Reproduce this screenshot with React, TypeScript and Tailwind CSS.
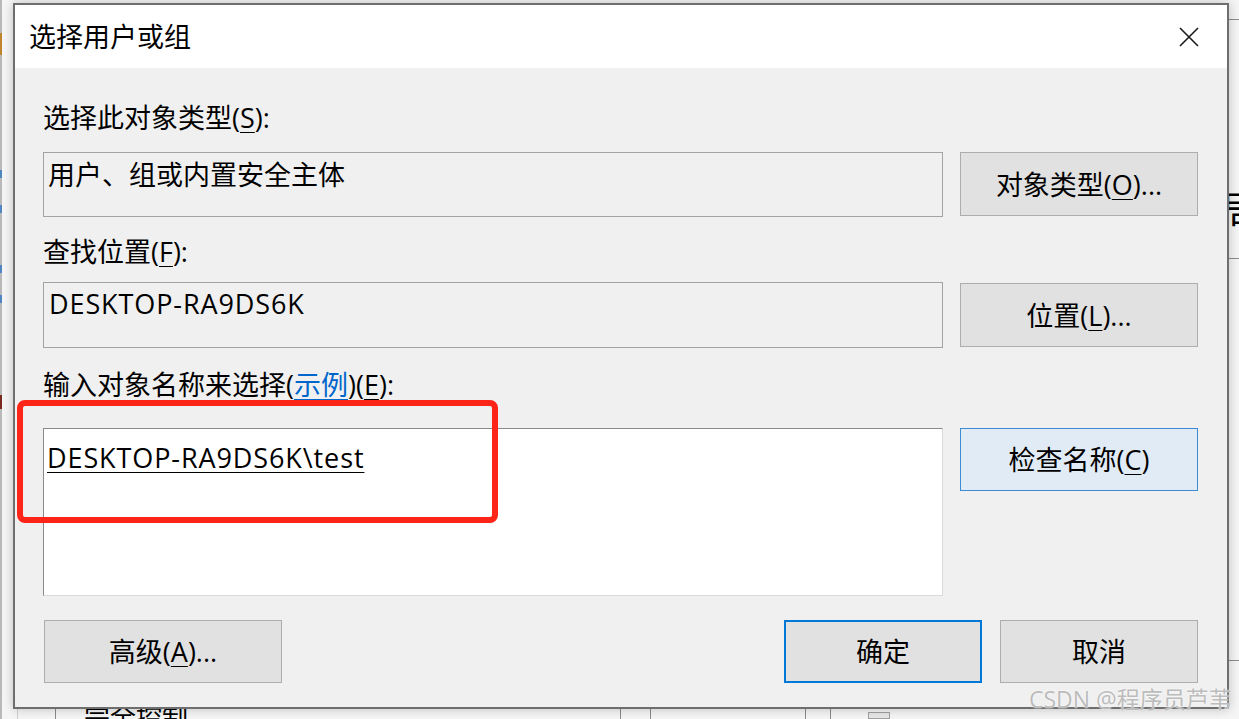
import type { ReactNode } from "react";

const font = "font-['Open_Sans','Noto_Sans_CJK_SC',sans-serif]";

function Acc({ c }: { c: string }) {
  return <span className="underline decoration-1 underline-offset-[4px]">{c}</span>;
}

function Btn({ children, className = "" }: { children: ReactNode; className?: string }) {
  return (
    <button className={`flex items-center justify-center text-[27px] leading-none text-black ${className}`}>
      {children}
    </button>
  );
}

export default function App() {
  return (
    <div className={`relative h-[719px] w-[1239px] overflow-hidden bg-[#f5f5f5] text-black ${font}`}>
      {/* window behind the dialog */}
      <div className="absolute left-0 top-0 h-full w-[2px] bg-[#b9b9b9]" />
      <div className="absolute left-0 top-[33px] h-[22px] w-[2px] bg-[#c0832e]" />
      <div className="absolute left-0 top-[170px] h-[8px] w-[2px] bg-[#4f86c0]" />
      <div className="absolute left-0 top-[205px] h-[8px] w-[2px] bg-[#4f86c0]" />
      <div className="absolute left-0 top-[265px] h-[8px] w-[2px] bg-[#4f86c0]" />
      <div className="absolute left-0 top-[295px] h-[8px] w-[2px] bg-[#4f86c0]" />
      <div className="absolute left-0 top-[395px] h-[14px] w-[2px] bg-[#7a2a20]" />
      <div className="absolute left-[1229px] top-[19px] h-px w-[10px] bg-[#8c8c8c]" />
      <div className="absolute left-[1229px] top-[258px] h-px w-[10px] bg-[#8c8c8c]" />
      <div className="absolute left-[1229px] top-[660px] h-px w-[10px] bg-[#8c8c8c]" />
      <div className="absolute left-[1220px] top-[190px] text-[40px] leading-none">局</div>
      <div className="absolute left-[17px] top-[700px] h-[19px] w-px bg-[#cfcfcf]" />
      <div className="absolute left-[55px] top-[700px] h-[19px] w-px bg-[#8a8a8a]" />
      <div className="absolute left-[620px] top-[700px] h-[19px] w-px bg-[#8a8a8a]" />
      <div className="absolute left-[650px] top-[700px] h-[19px] w-px bg-[#8a8a8a]" />
      <div className="absolute left-[805px] top-[700px] h-[19px] w-px bg-[#8a8a8a]" />
      <div className="absolute left-[830px] top-[700px] h-[19px] w-px bg-[#8a8a8a]" />
      <div className="absolute left-[868px] top-[712px] h-[7px] w-[22px] border border-[#a0a0a0] bg-[#e6e6e6]" />
      <div className="absolute left-[84px] top-[704px] text-[26px] leading-none">完全控制</div>

      {/* dialog */}
      <div className="absolute left-[13px] top-[3px] z-10 flex h-[706px] w-[1216px] flex-col border-2 border-[#6e6e6e] bg-[#f0f0f0] shadow-[0_0_10px_rgba(0,0,0,0.22)]">
        <div className="flex h-[63px] items-center justify-between bg-white pl-[14px] pr-[28px]">
          <span className="text-[27px] leading-none">选择用户或组</span>
          <svg width="20" height="20" viewBox="0 0 20 20" fill="none" stroke="#1a1a1a" strokeWidth="1.6">
            <path d="M1 1 L19 19 M19 1 L1 19" />
          </svg>
        </div>

        <div className="flex flex-col pl-[28px] pr-[29px] pt-[32px] text-[27px]">
          <div className="h-[36px] leading-[36px]">
            选择此对象类型(<Acc c="S" />):
          </div>
          <div className="mt-[16px] flex gap-[17px]">
            <div className="h-[65px] w-[900px] border border-[#a3a3a3] pl-[4px] pt-[4px] leading-[36px]">
              用户、组或内置安全主体
            </div>
            <Btn className="h-[64px] w-[238px] border border-[#adadad] bg-[#e1e1e1]">
              对象类型(<Acc c="O" />)...
            </Btn>
          </div>

          <div className="mt-[17px] h-[36px] leading-[36px]">
            查找位置(<Acc c="F" />):
          </div>
          <div className="mt-[12px] flex gap-[17px]">
            <div className="h-[66px] w-[900px] border border-[#a3a3a3] pl-[5px] pt-[3px] leading-[36px] tracking-[0.9px]">
              DESKTOP-RA9DS6K
            </div>
            <Btn className="mt-px h-[64px] w-[238px] border border-[#adadad] bg-[#e1e1e1]">
              位置(<Acc c="L" />)...
            </Btn>
          </div>

          <div className="mt-[19px] h-[36px] leading-[36px]">
            输入对象名称来选择(<span className="text-[#0066cc] underline decoration-1 underline-offset-[4px]">示例</span>)(<Acc c="E" />):
          </div>
          <div className="mt-[25px] flex gap-[17px]">
            <div className="h-[168px] w-[900px] border border-b-[#dadada] border-l-[#8a8a8a] border-r-[#dadada] border-t-[#8a8a8a] bg-white pl-[3px] pt-[11px] leading-[36px]">
              <span className="tracking-[0.9px] underline decoration-1 underline-offset-[4px]">DESKTOP-RA9DS6K\test</span>
            </div>
            <Btn className="h-[63px] w-[238px] border border-[#3c8bd5] bg-[#e1ebf5]">
              检查名称(<Acc c="C" />)
            </Btn>
          </div>

          <div className="mt-[24px] flex">
            <Btn className="ml-px h-[63px] w-[238px] border border-[#adadad] bg-[#e1e1e1]">
              高级(<Acc c="A" />)...
            </Btn>
            <div className="flex-1" />
            <Btn className="h-[63px] w-[198px] border-2 border-[#0078d7] bg-[#e1e1e1]">确定</Btn>
            <Btn className="ml-[18px] h-[63px] w-[198px] border border-[#adadad] bg-[#e1e1e1]">取消</Btn>
          </div>
        </div>
      </div>

      {/* annotation */}
      <div className="absolute left-[17px] top-[400px] z-20 h-[123px] w-[481px] rounded-[8px] border-[6px] border-[#fd2418]" />

      {/* watermark */}
      <div className="absolute left-[1029px] top-[685px] z-30 text-[23px] leading-[28px] text-[#bcbcbc] [text-shadow:0_0_2px_#ffffff]">
        CSDN @程序员芦苇
      </div>
    </div>
  );
}
